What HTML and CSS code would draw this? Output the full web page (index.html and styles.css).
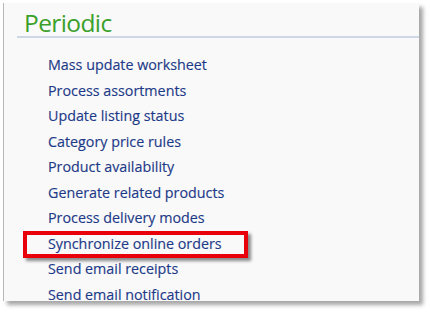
FILE: index.html
```html
<!DOCTYPE html>
<html>
<head>
<meta charset="utf-8">
<link rel="stylesheet" href="styles.css">
</head>
<body>
<div class="panel">
  <h1 class="title">Periodic</h1>
  <ul class="list">
    <li>Mass update worksheet</li>
    <li>Process assortments</li>
    <li>Update listing status</li>
    <li>Category price rules</li>
    <li>Product availability</li>
    <li>Generate related products</li>
    <li>Process delivery modes</li>
    <li class="hl"><span class="mark"></span>Synchronize online orders</li>
    <li>Send email receipts</li>
    <li>Send email notification</li>
  </ul>
</div>
</body>
</html>
```
FILE: styles.css
```css
html, body {
  margin: 0;
  padding: 0;
  background: #ffffff;
}
body {
  width: 430px;
  height: 316px;
  overflow: hidden;
  font-family: "Open Sans", "Segoe UI", sans-serif;
}
.panel {
  margin: 3px 0 0 3px;
  width: 416px;
  height: 298px;
  background: #f9f9f9;
  border-left: 1px solid #b9b9b9;
  box-shadow: 4px 4px 4px rgba(0,0,0,0.35);
  box-sizing: border-box;
  padding: 0 0 0 13px;
}
.title {
  margin: 0;
  padding: 5px 0 0 7px;
  font-weight: normal;
  font-size: 24.5px;
  line-height: 30px;
  color: #3aa02a;
  border-bottom: 2px solid #cdd7e6;
  height: 35px;
  box-sizing: border-box;
  letter-spacing: -0.6px;
}
.list {
  list-style: none;
  margin: 0;
  padding: 14px 0 0 31px;
}
.list li {
  font-size: 14.3px;
  line-height: 25.5px;
  height: 25.5px;
  color: #1d3a88;
  position: relative;
  -webkit-text-stroke: 0.15px #1d3a88;
}
.mark {
  position: absolute;
  left: -25px;
  top: 0;
  width: 225px;
  height: 27px;
  border: 4px solid #e8000a;
  box-sizing: border-box;
  box-shadow: 3px 3px 3px rgba(0,0,0,0.45);
}
```
